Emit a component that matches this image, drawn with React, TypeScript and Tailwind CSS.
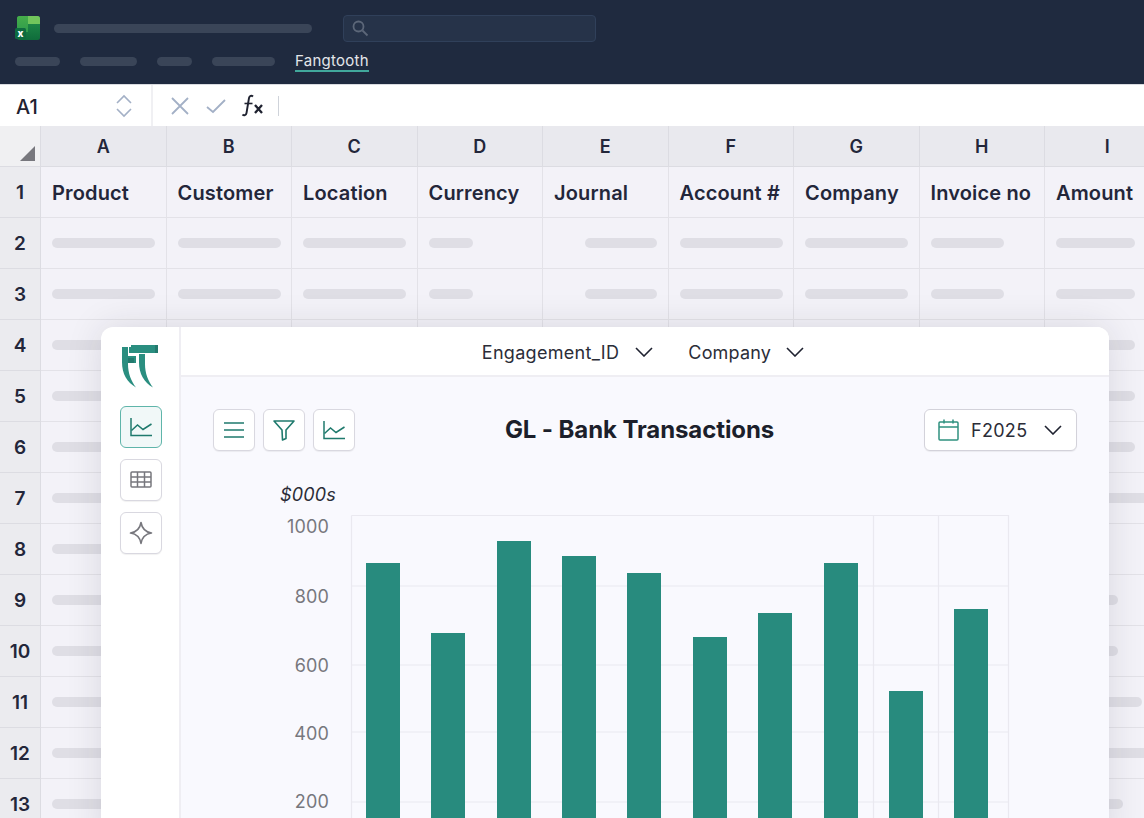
import React from "react";

const cols = ["A", "B", "C", "D", "E", "F", "G", "H", "I"];
const heads = ["Product", "Customer", "Location", "Currency", "Journal", "Account #", "Company", "Invoice no", "Amount"];
const baseWidths = [103, 103, 103, 44, 72, 103, 103, 73, 79];
const lastWidths: Record<number, number> = { 2: 79, 3: 79, 4: 79, 5: 79, 6: 79, 7: 100, 8: 36, 9: 62, 10: 62, 11: 86, 12: 100, 13: 67 };
const rows = [2, 3, 4, 5, 6, 7, 8, 9, 10, 11, 12, 13];
const bars = [
  [366, 563], [431, 633], [497, 541], [562, 556], [627, 573],
  [693, 637], [758, 613], [824, 563], [889, 691], [954, 609],
];
const yLabels = [["1000", 526.5], ["800", 597], ["600", 666], ["400", 734], ["200", 802]] as const;

function ChartLineIcon({ color = "#1f7a6d" }: { color?: string }) {
  return (
    <svg width="24" height="24" viewBox="0 0 24 24" fill="none" stroke={color} strokeWidth="1.5">
      <path d="M2 3v17.5h21" />
      <path d="M2.5 15.5 8.5 10l5.5 4.5 8.5-5.5" />
    </svg>
  );
}

function Chevron({ color = "#1f2230", w = 18 }: { color?: string; w?: number }) {
  return (
    <svg width={w} height="10" viewBox="0 0 18 10" fill="none" stroke={color} strokeWidth="1.6">
      <path d="M1 1l8 8 8-8" />
    </svg>
  );
}

function Button({ children, active }: { children: React.ReactNode; active?: boolean }) {
  return (
    <div
      className={
        active
          ? "w-[42px] h-[42px] rounded-md border border-[#5fb5aa] bg-[#f1f8f8] flex items-center justify-center"
          : "w-[42px] h-[42px] rounded-md border border-[#d9d8e0] bg-white flex items-center justify-center shadow-[0_1px_1px_rgba(0,0,0,0.06)]"
      }
    >
      {children}
    </div>
  );
}

function Skeleton({ w }: { w: number }) {
  return <div className="h-[10px] rounded-full bg-[#dfdee5]" style={{ width: w }} />;
}

export default function App() {
  return (
    <div className="relative w-full h-[818px] overflow-hidden bg-[#f3f2f8] font-['Inter',sans-serif] flex flex-col">
      <header className="h-[84px] shrink-0 bg-[#1f2a3f] pl-[15px] flex flex-col">
        <div className="flex items-center h-[57px] pb-[1px]">
          <svg width="26" height="26" viewBox="0 0 26 26" className="shrink-0">
            <defs>
              <linearGradient id="xlLeft" x1="0" y1="0" x2="0" y2="1">
                <stop offset="0" stopColor="#46ad4a" />
                <stop offset="1" stopColor="#2f9c4c" />
              </linearGradient>
              <linearGradient id="xlRight" x1="0" y1="0" x2="0" y2="1">
                <stop offset="0" stopColor="#23904b" />
                <stop offset="1" stopColor="#0f6c3b" />
              </linearGradient>
            </defs>
            <rect x="2" y="1" width="23" height="24" rx="2.500" fill="url(#xlRight)" />
            <path d="M4.500 1H13V17H2V3.500A2.500 2.500 0 0 1 4.500 1z" fill="url(#xlLeft)" />
            <path d="M13 1H22.500A2.500 2.500 0 0 1 25 3.500V9H13z" fill="#72c55c" />
            <rect x="0" y="13" width="11" height="11" rx="1.500" fill="#0e6b3f" />
            <text x="5.500" y="21.500" textAnchor="middle" fontSize="10" fontWeight="800" fill="#ffffff" fontFamily="Inter">x</text>
          </svg>
          <div className="ml-[13px] w-[258px] h-[9px] rounded-full bg-[#3a4558]" />
          <div className="ml-[31px] w-[253px] h-[27px] rounded-[4px] border border-[#30405a] bg-[#263349] flex items-center pl-[7px]">
            <svg width="18" height="18" viewBox="0 0 18 18" fill="none" stroke="#5c6779" strokeWidth="1.8">
              <circle cx="7.500" cy="7.500" r="5" />
              <path d="M11.500 11.500l5 5" />
            </svg>
          </div>
        </div>
        <nav className="flex items-start gap-[20px]">
          <div className="w-[45px] h-[9px] rounded-full bg-[#3a4558]" />
          <div className="w-[57px] h-[9px] rounded-full bg-[#3a4558]" />
          <div className="w-[35px] h-[9px] rounded-full bg-[#3a4558]" />
          <div className="w-[63px] h-[9px] rounded-full bg-[#3a4558]" />
          <div className="-mt-[6px] text-[15px] tracking-[0.25px] leading-[20px] text-[#e3e6ea] border-b-2 border-[#41a89c] h-[21px] whitespace-nowrap">Fangtooth</div>
        </nav>
      </header>

      <div className="h-[42px] shrink-0 bg-white border-t border-[#d9dbe0] flex items-center">
        <div className="w-[153px] h-full border-r-2 border-[#f0f0f3] flex items-center justify-between pl-[16px] pr-[18px]">
          <span className="text-[20px] font-medium text-[#1f2230] pt-[3px]">A1</span>
          <svg width="18" height="24" viewBox="0 0 18 24" fill="none" stroke="#a3b0c6" strokeWidth="1.6">
            <path d="M2 9l7-7 7 7" />
            <path d="M2 15l7 7 7-7" />
          </svg>
        </div>
        <div className="flex items-center pl-[17px]">
          <svg width="20" height="20" viewBox="0 0 20 20" fill="none" stroke="#a3b0c6" strokeWidth="1.8">
            <path d="M2 2l16 16M18 2 2 18" />
          </svg>
          <svg width="22" height="16" viewBox="0 0 22 16" fill="none" stroke="#a3b0c6" strokeWidth="1.8" className="ml-[15px]">
            <path d="M2 9l6 5L20 2" />
          </svg>
          <svg width="24" height="24" viewBox="0 0 24 24" fill="none" stroke="#1f2230" className="ml-[13px]">
            <path d="M13 2.500c-1.500-1.500-3.500-.8-4 1.500L6.500 19c-.4 2.300-2.500 3-4 1.500" strokeWidth="1.900" />
            <path d="M4.500 9.500h8" strokeWidth="1.600" />
            <path d="M15 11l7 8M22 11l-7 8" strokeWidth="2.300" />
          </svg>
          <div className="ml-[14px] w-px h-[20px] bg-[#cfd3da]" />
        </div>
      </div>

      <div className="grid grid-cols-[41px_repeat(9,125.5px)] grid-rows-[41px_repeat(13,51px)] shrink-0 w-[1170px]">
        <div className="relative bg-[#f0f0f2] border-r border-b border-[#dcdce2]">
          <div className="absolute right-[5px] bottom-[5px] w-0 h-0 border-l-[15px] border-l-transparent border-b-[15px] border-b-[#77777d]" />
        </div>
        {cols.map((c) => (
          <div key={c} className="bg-[#e9e9ee] border-r border-b border-[#dcdce2] flex items-center justify-center pt-[1px] text-[18px] font-semibold text-[#23263a]">
            {c}
          </div>
        ))}
        <div className="bg-[#ebebef] border-r border-b border-[#dcdce2] flex items-center justify-center pt-[2px] text-[19px] font-semibold text-[#23263a]">1</div>
        {heads.map((h) => (
          <div key={h} className="bg-[#f3f2f8] border-r border-b border-[#e3e2e8] flex items-center pl-[11px] pt-[2px] text-[20px] tracking-[0.15px] font-semibold text-[#23263a] whitespace-nowrap">
            {h}
          </div>
        ))}
        {rows.map((r) => (
          <React.Fragment key={r}>
            <div className="bg-[#ebebef] border-r border-b border-[#dcdce2] flex items-center justify-center pt-[2px] text-[19px] font-semibold text-[#23263a]">{r}</div>
            {baseWidths.map((w, i) => (
              <div key={i} className={i === 4 ? "bg-[#f3f2f8] border-r border-b border-[#e3e2e8] flex items-center justify-end pr-[11px]" : "bg-[#f3f2f8] border-r border-b border-[#e3e2e8] flex items-center pl-[11px]"}>
                <Skeleton w={i === 8 ? lastWidths[r] : w} />
              </div>
            ))}
          </React.Fragment>
        ))}
      </div>

      <section className="absolute left-[101px] top-[327px] w-[1008px] h-[520px] rounded-t-[12px] bg-white shadow-[0_0_36px_rgba(30,30,50,0.12)] flex overflow-hidden">
        <aside className="w-[80px] shrink-0 border-r-2 border-[#efeef3] flex flex-col items-center pt-[17px]">
          <svg width="40" height="44" viewBox="0 0 40 44" className="ml-[2px]">
            <path d="M1 3H7V20C7 29 10 37 15 43.500 6 38 1 30 1 18z" fill="#2a8e80" />
            <path d="M10 1H37V9H8V3H10z" fill="#2a8e80" />
            <path d="M34 1h3v8h-3z" fill="#237a6e" />
            <path d="M18 10h6v10c0 9 3 17 8 23.500-9-5-14-14-14-25z" fill="#2a8e80" />
            <path d="M7 12h8v7H7z" fill="#2a8e80" />
            <path d="M7 14h6v5H7z" fill="#237a6e" />
          </svg>
          <div className="flex flex-col gap-[11px] mt-[18px] ml-[2px]">
            <Button active>
              <ChartLineIcon />
            </Button>
            <Button>
              <svg width="22" height="18" viewBox="0 0 22 18" fill="none" stroke="#77777d" strokeWidth="1.5">
                <rect x="1" y="1" width="20" height="15" rx="1" />
                <path d="M1 6h20M1 11h20M7.500 1v15M14.500 1v15" />
              </svg>
            </Button>
            <Button>
              <svg width="24" height="24" viewBox="0 0 24 24" fill="none" stroke="#77777d" strokeWidth="1.6" strokeLinejoin="round">
                <path d="M12 1.500c1 6 4 9.500 10.500 10.500C16 13 13 16 12 22.500 11 16 8 13 1.500 12 8 11 11 7.500 12 1.500z" />
              </svg>
            </Button>
          </div>
        </aside>

        <div className="flex-1 min-w-0 flex flex-col">
          <div className="h-[50px] shrink-0 border-b-2 border-[#efeef3] bg-white flex items-center justify-center pt-[2px] pr-[4px] text-[18px] tracking-[0.3px] text-[#2b2d38]">
            <span>Engagement_ID</span>
            <span className="ml-[16px]"><Chevron /></span>
            <span className="ml-[35px] tracking-[0.2px]">Company</span>
            <span className="ml-[15px]"><Chevron /></span>
          </div>
          <div className="flex-1 bg-[#f9f9fe]">
            <div className="flex items-center justify-between pt-[32px] px-[32px] relative">
              <div className="flex gap-[8px]">
                <Button>
                  <svg width="22" height="18" viewBox="0 0 22 18" fill="none" stroke="#1f7a6d" strokeWidth="1.6">
                    <path d="M1 2h20M1 9h20M1 16h20" />
                  </svg>
                </Button>
                <Button>
                  <svg width="24" height="24" viewBox="0 0 24 24" fill="none" stroke="#1f7a6d" strokeWidth="1.6" strokeLinejoin="round">
                    <path d="M2 3h20l-8 9v8.500l-3.500 1.500-.5-10z" />
                  </svg>
                </Button>
                <Button>
                  <ChartLineIcon />
                </Button>
              </div>
              <h1 className="text-[24px] tracking-[-0.1px] font-bold text-[#1c1f2b] absolute left-0 right-0 text-center top-[32px] leading-[42px] -ml-[11px] pointer-events-none">GL - Bank Transactions</h1>
              <div className="w-[153px] h-[42px] rounded-md border border-[#d3d2da] bg-white shadow-[0_1px_1px_rgba(0,0,0,0.06)] flex items-center pl-[13px]">
                <svg width="21" height="22" viewBox="0 0 21 22" fill="none" stroke="#2f917f" strokeWidth="1.5">
                  <rect x="1" y="3" width="19" height="18" rx="1" />
                  <path d="M1 8h19M6 0.500v4M15 0.500v4" />
                </svg>
                <span className="ml-[12px] text-[18px] tracking-[0.3px] text-[#2b2d38]">F2025</span>
                <span className="ml-[17px]"><Chevron /></span>
              </div>
            </div>
            <svg width="929" height="370" viewBox="181 451 929 370" className="block">
              <g stroke="#eae9f0" strokeWidth="1.200" fill="none">
                <path d="M351.500 515.500H1008.500V820" />
                <path d="M351.500 515.500V820M873.500 515.500V820M938.500 515.500V820" />
                <path d="M351 586H1009M351 665H1009M351 732H1009M351 802H1009" />
              </g>
              {bars.map(([x, y]) => (
                <rect key={x} x={x} y={y} width="34" height={820 - y} fill="#288b7e" />
              ))}
              <text x="280" y="501" fontSize="18" letterSpacing="0.2" fontStyle="italic" fill="#2b2d38" fontFamily="Inter">$000s</text>
              {yLabels.map(([t, y]) => (
                <text key={t} x="329" y={y + 6} textAnchor="end" fontSize="18" letterSpacing="0.15" fill="#77777d" fontFamily="Inter">{t}</text>
              ))}
            </svg>
          </div>
        </div>
      </section>
    </div>
  );
}
